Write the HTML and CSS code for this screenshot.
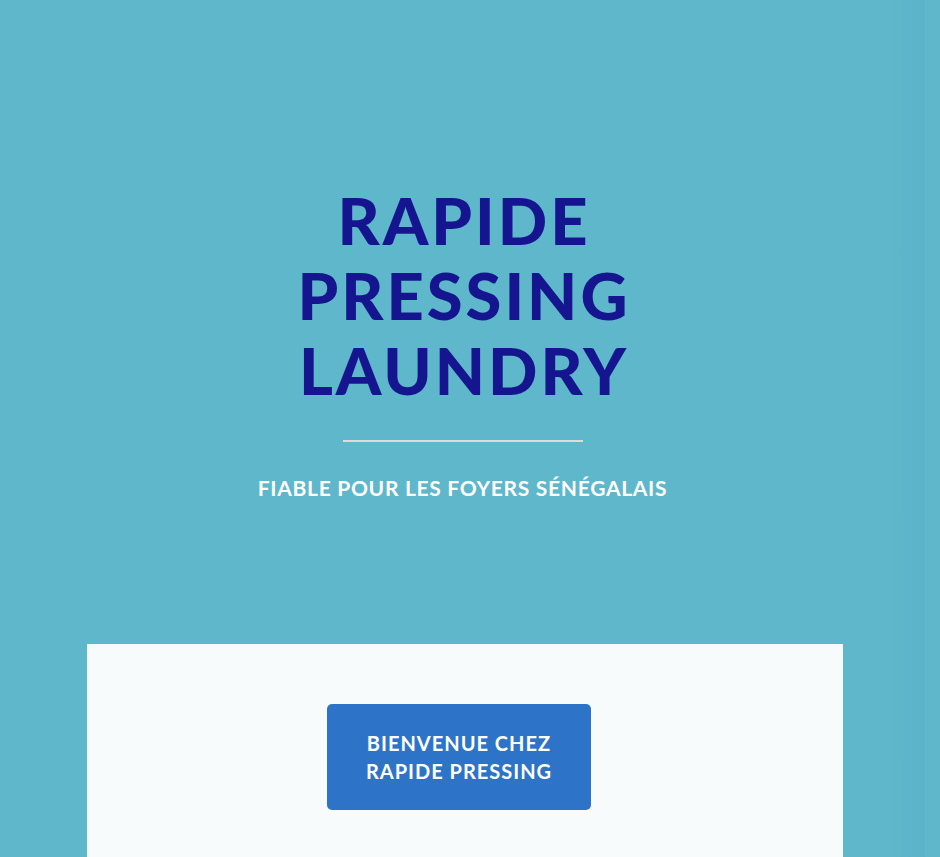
FILE: index.html
```html
<!DOCTYPE html>
<html lang="fr">
<head>
<meta charset="utf-8">
<title>Rapide Pressing Laundry</title>
<link rel="stylesheet" href="styles.css">
</head>
<body>
<div class="page">
  <header class="hero">
    <h1 class="hero-title">RAPIDE<br>PRESSING<br>LAUNDRY</h1>
    <hr class="hero-rule">
    <p class="hero-sub">FIABLE POUR LES FOYERS SÉNÉGALAIS</p>
  </header>
  <section class="card">
    <a class="welcome-btn" href="#">BIENVENUE CHEZ<br>RAPIDE PRESSING</a>
  </section>
</div>
</body>
</html>
```

FILE: styles.css
```css
html, body {
  margin: 0;
  padding: 0;
  height: 100%;
  overflow: hidden;
}
body {
  background: #5eb7cb;
  font-family: "Lato", "Open Sans", sans-serif;
}
.page {
  width: 925px;
  min-height: 857px;
  background: linear-gradient(to right, #5eb7cb 0, #5eb7cb 96%, #5ab3c8 100%);
}
.hero {
  padding-top: 183px;
  display: flex;
  flex-direction: column;
  align-items: center;
  text-align: center;
}
.hero-title {
  margin: 0;
  font-size: 65px;
  line-height: 75px;
  font-weight: 900;
  letter-spacing: 3px;
  color: #15168f;
  padding-left: 3px;
}
.hero-rule {
  width: 240px;
  height: 2px;
  border: 0;
  margin: 32px 0 0;
  background: #dcdcdc;
}
.hero-sub {
  margin: 33px 0 0;
  font-size: 21px;
  line-height: 26px;
  font-weight: 700;
  letter-spacing: 0.7px;
  color: #ffffff;
}
.card {
  margin: 143px 0 0 87px;
  width: 756px;
  height: 220px;
  background: #f7fbfc;
  padding: 60px 0 0 240px;
  box-sizing: border-box;
}
.welcome-btn {
  display: inline-flex;
  align-items: center;
  justify-content: center;
  width: 264px;
  height: 106px;
  border-radius: 5px;
  background: #2d74c9;
  color: #ffffff;
  text-decoration: none;
  font-size: 20px;
  font-weight: 700;
  line-height: 28px;
  text-align: center;
  letter-spacing: 1px;
}
```
